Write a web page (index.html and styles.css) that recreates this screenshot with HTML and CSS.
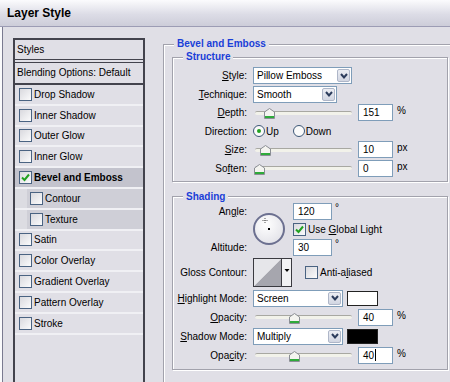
FILE: index.html
```html
<!DOCTYPE html>
<html lang="en">

<head>
    <meta charset="UTF-8">
    <title>Layer Style</title>
    <link rel="stylesheet" href="styles.css">
</head>

<body>
    <div class="window">
        <div class="titlebar">Layer Style</div>

        <div class="dialog">
            <div class="styles-panel">
                <div class="panel-head">Styles</div>
                <div class="panel-blend">Blending Options: Default</div>
                <ul class="style-list">
                    <li><span class="check"></span>Drop Shadow</li>
                    <li><span class="check"></span>Inner Shadow</li>
                    <li><span class="check"></span>Outer Glow</li>
                    <li><span class="check"></span>Inner Glow</li>
                    <li class="active">
                        <span class="check"><svg width="11" height="11" viewBox="0 0 11 11"><path d="M2 5.5 L4.5 8 L9 2.5" fill="none" stroke="#21a121" stroke-width="2"/></svg></span>Bevel and Emboss
                    </li>
                    <li class="sub"><span class="check"></span>Contour</li>
                    <li class="sub"><span class="check"></span>Texture</li>
                    <li><span class="check"></span>Satin</li>
                    <li><span class="check"></span>Color Overlay</li>
                    <li><span class="check"></span>Gradient Overlay</li>
                    <li><span class="check"></span>Pattern Overlay</li>
                    <li><span class="check"></span>Stroke</li>
                </ul>
            </div>

            <fieldset class="group outer">
                <legend>Bevel and Emboss</legend>

                <fieldset class="group structure">
                    <legend>Structure</legend>
                    <div class="form">
                        <span class="lbl"><u>S</u>tyle:</span>
                        <div class="ctl">
                            <div class="select w-style">
                                <span class="val">Pillow Emboss</span>
                                <span class="arrow"><svg width="10" height="10" viewBox="0 0 10 10"><path d="M2 3 L5 6.5 L8 3" fill="none" stroke="#2c3c5c" stroke-width="2"/></svg></span>
                            </div>
                        </div>

                        <span class="lbl"><u>T</u>echnique:</span>
                        <div class="ctl">
                            <div class="select w-tech">
                                <span class="val">Smooth</span>
                                <span class="arrow"><svg width="10" height="10" viewBox="0 0 10 10"><path d="M2 3 L5 6.5 L8 3" fill="none" stroke="#2c3c5c" stroke-width="2"/></svg></span>
                            </div>
                        </div>

                        <span class="lbl"><u>D</u>epth:</span>
                        <div class="ctl">
                            <div class="slider">
                                <div class="track"></div>
                                <svg class="thumb" style="left: 11px" width="11" height="11" viewBox="0 0 11 11"><path d="M0.5 4 L5.5 0.5 L10.5 4 V10.5 H0.5 Z" fill="#f4f4f0" stroke="#8a8e94"/><rect x="1" y="8" width="9" height="2" fill="#2eaa3a"/></svg>
                            </div>
                            <div class="field w-num">151</div>
                            <span class="unit">%</span>
                        </div>

                        <span class="lbl">Direction:</span>
                        <div class="ctl">
                            <span class="radio"><svg width="12" height="12" viewBox="0 0 12 12"><circle cx="6" cy="6" r="5.5" fill="#fafafa" stroke="#3d5776"/><circle cx="6" cy="6" r="2" fill="#21a121"/></svg>Up</span>
                            <span class="radio down"><svg width="12" height="12" viewBox="0 0 12 12"><circle cx="6" cy="6" r="5.5" fill="#fafafa" stroke="#3d5776"/></svg>Down</span>
                        </div>

                        <span class="lbl"><u>S</u>ize:</span>
                        <div class="ctl">
                            <div class="slider">
                                <div class="track"></div>
                                <svg class="thumb" style="left: 7px" width="11" height="11" viewBox="0 0 11 11"><path d="M0.5 4 L5.5 0.5 L10.5 4 V10.5 H0.5 Z" fill="#f4f4f0" stroke="#8a8e94"/><rect x="1" y="8" width="9" height="2" fill="#2eaa3a"/></svg>
                            </div>
                            <div class="field w-num">10</div>
                            <span class="unit">px</span>
                        </div>

                        <span class="lbl">So<u>f</u>ten:</span>
                        <div class="ctl">
                            <div class="slider">
                                <div class="track"></div>
                                <svg class="thumb" style="left: 1px" width="11" height="11" viewBox="0 0 11 11"><path d="M0.5 4 L5.5 0.5 L10.5 4 V10.5 H0.5 Z" fill="#f4f4f0" stroke="#8a8e94"/><rect x="1" y="8" width="9" height="2" fill="#2eaa3a"/></svg>
                            </div>
                            <div class="field w-num">0</div>
                            <span class="unit">px</span>
                        </div>
                    </div>
                </fieldset>

                <fieldset class="group shading">
                    <legend>Shading</legend>
                    <div class="form shade-form">
                        <span class="lbl">An<u>g</u>le:</span>
                        <div class="dial">
                            <svg width="32" height="32" viewBox="0 0 32 32">
                                <defs>
                                    <radialGradient id="dialFill" cx="40%" cy="35%" r="70%">
                                        <stop offset="0" stop-color="#ffffff"/>
                                        <stop offset="1" stop-color="#e2e2e8"/>
                                    </radialGradient>
                                </defs>
                                <circle cx="16" cy="16" r="15" fill="url(#dialFill)" stroke="#6c7090" stroke-width="2"/>
                                <path d="M12 5 V10 M9.5 7.5 H14.5" stroke="#555" stroke-width="1" stroke-dasharray="1 1"/>
                                <rect x="15" y="15" width="2" height="2" fill="#000"/>
                            </svg>
                        </div>
                        <div class="ctl">
                            <div class="field w-angle">120</div>
                            <span class="deg">°</span>
                        </div>

                        <div class="ctl col3">
                            <span class="check"><svg width="11" height="11" viewBox="0 0 11 11"><path d="M2 5.5 L4.5 8 L9 2.5" fill="none" stroke="#21a121" stroke-width="2"/></svg></span>
                            <span>Use <u>G</u>lobal Light</span>
                        </div>

                        <span class="lbl row3">Altitude:</span>
                        <div class="ctl col3">
                            <div class="field w-angle">30</div>
                            <span class="deg">°</span>
                        </div>

                        <span class="lbl">Gloss Contour:</span>
                        <div class="ctl wide">
                            <svg class="contour" width="39" height="29" viewBox="0 0 39 29">
                                <rect x="0.5" y="0.5" width="38" height="28" fill="#f2f2f4" stroke="#3a3a40"/>
                                <polygon points="1,28 28,1 28,28" fill="#a6a6ae"/>
                                <polygon points="1,1 28,1 1,28" fill="#e6e6ea"/>
                                <line x1="28.5" y1="0" x2="28.5" y2="29" stroke="#3a3a40"/>
                                <polygon points="31.5,11 36.5,11 34,14" fill="#000"/>
                            </svg>
                            <span class="check aa"></span>
                            <span>Anti-a<u>l</u>iased</span>
                        </div>

                        <span class="lbl"><u>H</u>ighlight Mode:</span>
                        <div class="ctl wide">
                            <div class="select w-mode">
                                <span class="val">Screen</span>
                                <span class="arrow"><svg width="10" height="10" viewBox="0 0 10 10"><path d="M2 3 L5 6.5 L8 3" fill="none" stroke="#2c3c5c" stroke-width="2"/></svg></span>
                            </div>
                            <span class="swatch white"></span>
                        </div>

                        <span class="lbl"><u>O</u>pacity:</span>
                        <div class="ctl wide">
                            <div class="slider">
                                <div class="track"></div>
                                <svg class="thumb" style="left: 36px" width="11" height="11" viewBox="0 0 11 11"><path d="M0.5 4 L5.5 0.5 L10.5 4 V10.5 H0.5 Z" fill="#f4f4f0" stroke="#8a8e94"/><rect x="1" y="8" width="9" height="2" fill="#2eaa3a"/></svg>
                            </div>
                            <div class="field w-num">40</div>
                            <span class="unit">%</span>
                        </div>

                        <span class="lbl"><u>S</u>hadow Mode:</span>
                        <div class="ctl wide">
                            <div class="select w-mode">
                                <span class="val">Multiply</span>
                                <span class="arrow"><svg width="10" height="10" viewBox="0 0 10 10"><path d="M2 3 L5 6.5 L8 3" fill="none" stroke="#2c3c5c" stroke-width="2"/></svg></span>
                            </div>
                            <span class="swatch black"></span>
                        </div>

                        <span class="lbl">Opa<u>c</u>ity:</span>
                        <div class="ctl wide">
                            <div class="slider">
                                <div class="track"></div>
                                <svg class="thumb" style="left: 36px" width="11" height="11" viewBox="0 0 11 11"><path d="M0.5 4 L5.5 0.5 L10.5 4 V10.5 H0.5 Z" fill="#f4f4f0" stroke="#8a8e94"/><rect x="1" y="8" width="9" height="2" fill="#2eaa3a"/></svg>
                            </div>
                            <div class="field w-num">40<span class="caret"></span></div>
                            <span class="unit">%</span>
                        </div>
                    </div>
                </fieldset>
            </fieldset>
        </div>
    </div>
</body>

</html>
```

FILE: styles.css
```css
body {
    margin: 0;
    background: #e0dfe6;
    font-family: "Liberation Sans", Arial, sans-serif;
    font-size: 10px;
    color: #000;
    overflow: hidden;
}

.window {
    width: 450px;
    height: 382px;
    overflow: hidden;
}

.titlebar {
    height: 27px;
    box-sizing: border-box;
    padding-left: 7px;
    display: flex;
    align-items: center;
    font-size: 12px;
    font-weight: bold;
    background: linear-gradient(#fbfbfd, #dcdce6 55%, #cdcdd9);
    border-bottom: 1px solid #9c9cb4;
}

.dialog {
    display: flex;
    align-items: flex-start;
    padding: 11px 0 0 11px;
    border-left: 2px solid #fafafc;
    box-shadow: inset 1px 0 0 #7a7a90;
    height: 380px;
}

/* left list */

.styles-panel {
    flex: none;
    width: 132px;
    height: 360px;
    box-sizing: border-box;
    border: 2px solid #43434d;
    border-bottom: none;
}

.panel-head {
    height: 19px;
    line-height: 19px;
    padding-left: 2px;
    border-bottom: 1px solid #43434d;
}

.panel-blend {
    height: 20px;
    line-height: 20px;
    padding-left: 2px;
    margin-top: 2px;
    border-top: 1px solid #43434d;
    border-bottom: 2px solid #43434d;
}

.style-list {
    list-style: none;
    margin: 0;
    padding: 0;
}

.style-list li {
    height: 18.8px;
    display: flex;
    align-items: center;
    padding-left: 4px;
    border-bottom: 2px solid #f0f0f4;
}

.style-list li.active {
    background: #c3c3cd;
    font-weight: bold;
}

.style-list li.sub {
    padding-left: 15px;
    background: linear-gradient(to right, #dcdce2 12px, #cfcfd7 12px);
}

.check {
    flex: none;
    width: 11px;
    height: 11px;
    margin-right: 2px;
    border: 1px solid #4a6382;
    background: linear-gradient(135deg, #d9d9de, #fbfbfc);
    display: inline-flex;
}

/* groups */

.group {
    margin: 0;
    padding: 0;
    min-width: 0;
    box-sizing: border-box;
    border: 1px solid #a2a2ac;
    box-shadow: inset 1px 1px 0 #fff, 1px 1px 0 #fff;
}

.group legend {
    font-weight: bold;
    color: #1a3ed8;
    line-height: 12px;
    padding: 0 3px;
    margin-left: 10px;
    background: #e0dfe6;
}

.outer {
    flex: none;
    width: 320px;
    height: 400px;
    margin-left: 18px;
}

.structure {
    width: 276px;
    margin: 1px 0 0 8px;
    padding: 4px 0 4px;
}

.shading {
    width: 276px;
    margin: 9px 0 0 8px;
    padding: 0 0 5px;
}

.form {
    display: grid;
    grid-template-columns: 80px 1fr;
    grid-auto-rows: 17px;
    row-gap: 1.6px;
    align-items: center;
}

.shade-form {
    grid-template-columns: 80px 40px 1fr;
    grid-template-rows: 17px 15px 17px 30px 17px 17px 17px 17px;
    row-gap: 2px;
}

.lbl {
    text-align: right;
    padding-right: 6px;
    white-space: nowrap;
}

.ctl {
    display: flex;
    align-items: center;
    height: 100%;
    white-space: nowrap;
}

.col3 {
    grid-column: 3;
}

.row3 {
    grid-column: 1;
}

.wide {
    grid-column: 2 / 4;
}

.dial {
    grid-column: 2;
    grid-row: 1 / 4;
    display: flex;
    align-self: center;
}

/* controls */

.select {
    display: flex;
    align-items: center;
    height: 17px;
    box-sizing: border-box;
    border: 1px solid #7f9db9;
    background: #fff;
}

.select .val {
    flex: 1;
    padding-left: 3px;
}

.select .arrow {
    width: 13px;
    height: 13px;
    margin-right: 1px;
    box-sizing: border-box;
    border: 1px solid #aeb6c8;
    border-radius: 2px;
    background: linear-gradient(#eceef4, #d2d6e2);
    display: flex;
    align-items: center;
    justify-content: center;
}

.w-style {
    width: 99px;
}

.w-tech {
    width: 84px;
}

.w-mode {
    width: 90px;
}

.field {
    height: 17px;
    box-sizing: border-box;
    border: 1px solid #7f9db9;
    background: #fff;
    padding-left: 4px;
    display: flex;
    align-items: center;
}

.w-num {
    width: 35px;
}

.w-angle {
    width: 39px;
}

.caret {
    width: 1px;
    height: 12px;
    margin-left: 1px;
    background: #000;
}

.unit {
    margin-left: 4px;
    align-self: flex-start;
    margin-top: 1px;
}

.deg {
    margin-left: 3px;
    align-self: flex-start;
    line-height: 10px;
}

.slider {
    position: relative;
    width: 100px;
    height: 17px;
    margin-right: 5px;
    display: flex;
    align-items: center;
}

.track {
    width: 97px;
    height: 3px;
    margin-left: 2px;
    border-top: 1px solid #a8a8a2;
    border-radius: 2px;
    background: #f2f2ea;
}

.thumb {
    position: absolute;
    top: 4px;
}

.radio {
    display: inline-flex;
    align-items: center;
    gap: 1px;
}

.radio.down {
    margin-left: 14px;
}

.col3 .check {
    margin-right: 2px;
}

.check.aa {
    margin-left: 13px;
}

.swatch {
    width: 31px;
    height: 15px;
    margin-left: 4px;
    box-sizing: border-box;
    border: 1px solid #222;
}

.swatch.white {
    background: #fff;
}

.swatch.black {
    background: #000;
}
```
